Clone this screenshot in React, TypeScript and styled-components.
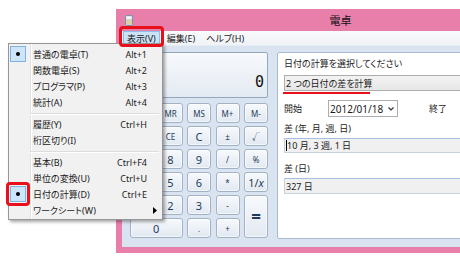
import React from 'react';
import styled, { createGlobalStyle, css } from 'styled-components';

const GlobalStyle = createGlobalStyle`
  html, body {
    margin: 0;
    padding: 0;
    background: #fff;
  }
  body {
    font-family: "Noto Sans", "Noto Sans CJK JP", sans-serif;
    font-feature-settings: "palt" 1;
    color: #1a1a1a;
  }
`;

const callout = css`
  &::after {
    content: '';
    position: absolute;
    border: 3px solid #e8101a;
    border-radius: 4px;
    z-index: 3;
  }
`;

const Stage = styled.div`
  position: relative;
  width: 460px;
  height: 261px;
  overflow: hidden;
  box-sizing: border-box;
  padding: 9px 0 0 116px;
`;

const CalcWindow = styled.div`
  width: 440px;
  height: 244px;
  background: #e87fab;
  display: flex;
  flex-direction: column;
`;

const TitleBar = styled.div`
  height: 22px;
  flex: none;
  display: grid;
  grid-template-columns: 1fr auto 1fr;
  align-items: center;
  padding-left: 9px;
`;

const Title = styled.div`
  font-size: 11px;
  color: #111;
`;

const Client = styled.div`
  flex: 1;
  margin: 0 0 6px 6px;
  background: #dae4f0;
  display: flex;
  flex-direction: column;
`;

const MenuBar = styled.div`
  height: 14px;
  flex: none;
  display: flex;
  gap: 3px;
  padding-left: 1px;
  background: linear-gradient(#f8f9fb, #f0f3f7);
  border-bottom: 1px solid #e6ecf3;
`;

const MenuBarItem = styled.div<{ $open?: boolean }>`
  position: relative;
  display: flex;
  align-items: center;
  padding: 0 3px;
  font-size: 9px;
  box-sizing: border-box;
  border: 1px solid ${({ $open }) => ($open ? '#8fbde3' : 'transparent')};
  background: ${({ $open }) => ($open ? '#cbe3f7' : 'transparent')};

  ${({ $open }) =>
    $open &&
    css`
      ${callout}
      &::after {
        left: -5px;
        right: -5px;
        top: -6px;
        bottom: -3px;
      }
    `}
`;

const Body = styled.div`
  flex: 1;
  display: flex;
  gap: 9px;
  padding: 6px 0 8px 8px;
  min-height: 0;
`;

const Keypad = styled.div`
  width: 138px;
  flex: none;
  display: flex;
  flex-direction: column;
  gap: 5px;
`;

const Display = styled.div`
  height: 46px;
  box-sizing: border-box;
  border: 1px solid #93a7bf;
  border-radius: 2px;
  background: linear-gradient(#f7f9fc, #e4eaf2);
  display: flex;
  align-items: flex-end;
  justify-content: flex-end;
  padding: 0 3px 7px 0;
  font-family: "DejaVu Sans Mono", monospace;
  font-size: 15px;
  line-height: 15px;
  color: #111;
`;

const Keys = styled.div`
  display: grid;
  grid-template-columns: repeat(5, 24px);
  grid-auto-rows: 20px;
  column-gap: 4.5px;
  row-gap: 3px;
`;

const Key = styled.div<{ $wide?: boolean; $tall?: boolean; $small?: boolean; $big?: boolean }>`
  grid-column: span ${({ $wide }) => ($wide ? 2 : 1)};
  grid-row: span ${({ $tall }) => ($tall ? 2 : 1)};
  box-sizing: border-box;
  border: 1px solid #a2b2c6;
  border-radius: 3px;
  background: linear-gradient(#f7f9fc, #e2e9f1);
  box-shadow: inset 0 0 0 1px rgba(255, 255, 255, 0.6);
  display: flex;
  align-items: center;
  justify-content: center;
  color: #1e3a5c;
  font-size: ${({ $small, $big }) => ($big ? '17px' : $small ? '8px' : '11px')};
  font-weight: ${({ $big }) => ($big ? 700 : 400)};
`;

const Panel = styled.div`
  flex: 1;
  background: #fff;
  border: 1px solid #a8bbd3;
  border-radius: 2px;
  padding: 5px 6px;
  display: flex;
  flex-direction: column;
  font-size: 9px;
`;

const Caption = styled.div<{ $gap?: number }>`
  line-height: 12px;
  margin-top: ${({ $gap }) => $gap ?? 0}px;
`;

const Combo = styled.div`
  margin-top: 5px;
  height: 16px;
  box-sizing: border-box;
  border: 1px solid #acacac;
  background: linear-gradient(#f3f3f3, #e6e6e6);
  display: flex;
  align-items: center;
  padding-left: 1px;
`;

const Marker = styled.div`
  width: 87px;
  height: 2px;
  margin: 1px 0 0 -1px;
  background: #e8101a;
`;

const DateRow = styled.div`
  margin-top: 6px;
  height: 17px;
  display: flex;
  align-items: center;
`;

const FieldLabel = styled.div<{ $width?: number; $gap?: number }>`
  width: ${({ $width }) => ($width ? `${$width}px` : 'auto')};
  margin-left: ${({ $gap }) => $gap ?? 0}px;
`;

const DateBox = styled.div`
  width: 70px;
  height: 17px;
  box-sizing: border-box;
  border: 1px solid #abadb3;
  display: flex;
  align-items: center;
  justify-content: space-between;
  padding: 0 3px 0 1px;
  font-size: 10px;
`;

const ResultBox = styled.div<{ $h: number }>`
  margin-top: 3px;
  height: ${({ $h }) => $h}px;
  box-sizing: border-box;
  border: 1px solid #c8d1dc;
  border-top-color: #a3bfe2;
  background: #f0f0f0;
  display: flex;
  align-items: center;
  padding-left: 1px;
`;

const Caret = styled.span`
  width: 1px;
  height: 11px;
  background: #000;
`;

const DropMenu = styled.div`
  position: absolute;
  left: 8px;
  top: 43px;
  width: 155px;
  box-sizing: border-box;
  border: 1px solid #979797;
  padding: 2px 0 1px;
  background: linear-gradient(90deg, #f1f1f1 21px, #e2e2e2 21px 22px, #fff 22px 23px, #f1f1f1 23px);
  box-shadow: 2px 2px 3px rgba(0, 0, 0, 0.35);
  z-index: 2;
  font-size: 9px;
`;

const MenuRow = styled.div`
  height: 16px;
  display: grid;
  grid-template-columns: 22px 1fr auto 15px;
  align-items: center;
`;

const Check = styled.div<{ $marked?: boolean }>`
  position: relative;
  width: 16px;
  height: 16px;
  margin-left: 1px;
  box-sizing: border-box;
  border: 1px solid #7fb3e6;
  background: #cde5f8;
  display: flex;
  align-items: center;
  justify-content: center;

  &::before {
    content: '';
    width: 4px;
    height: 4px;
    border-radius: 50%;
    background: #000;
  }

  ${({ $marked }) =>
    $marked &&
    css`
      ${callout}
      &::after {
        left: -5px;
        right: -5px;
        top: -5px;
        bottom: -5px;
      }
    `}
`;

const ItemLabel = styled.span`
  padding-left: 2px;
`;

const Shortcut = styled.span`
  text-align: right;
`;

const SubArrow = styled.span`
  display: flex;
  justify-content: center;
`;

const Separator = styled.div`
  height: 6px;
  margin: 0 3px 0 21px;
  display: flex;
  align-items: center;

  &::before {
    content: '';
    flex: 1;
    height: 1px;
    background: #dcdcdc;
    box-shadow: 0 1px 0 #fff;
  }
`;

type Item = { label: string; key?: string; check?: boolean; marked?: boolean; sub?: boolean } | 'sep';

const menuItems: Item[] = [
  { label: '普通の電卓(T)', key: 'Alt+1', check: true },
  { label: '関数電卓(S)', key: 'Alt+2' },
  { label: 'プログラマ(P)', key: 'Alt+3' },
  { label: '統計(A)', key: 'Alt+4' },
  'sep',
  { label: '履歴(Y)', key: 'Ctrl+H' },
  { label: '桁区切り(I)' },
  'sep',
  { label: '基本(B)', key: 'Ctrl+F4' },
  { label: '単位の変換(U)', key: 'Ctrl+U' },
  { label: '日付の計算(D)', key: 'Ctrl+E', check: true, marked: true },
  { label: 'ワークシート(W)', sub: true },
];

const keys = [
  'MC', 'MR', 'MS', 'M+', 'M-',
  '←', 'CE', 'C', '±', '√',
  '7', '8', '9', '/', '%',
  '4', '5', '6', '*', '1/x',
  '1', '2', '3', '-', '=',
  '0', '.', '+',
];

const smallKeys = ['±', '√', '*', '/', '%', '-', '+', '.'];

function AppIcon() {
  return (
    <svg width="8" height="11" viewBox="0 0 8 11">
      <rect x="0.5" y="0.5" width="7" height="10" rx="1" fill="#c6d3e2" stroke="#7d91aa" />
      <rect x="1.5" y="1.5" width="5" height="2.5" fill="#f4f7fb" />
      <rect x="1.5" y="5" width="5" height="4.5" fill="#e9cf7a" opacity="0.7" />
    </svg>
  );
}

function Chevron() {
  return (
    <svg width="6" height="4" viewBox="0 0 6 4">
      <path d="M0.5 0.5 L3 3 L5.5 0.5" fill="none" stroke="#333" strokeWidth="1.2" />
    </svg>
  );
}

export default function App() {
  return (
    <>
      <GlobalStyle />
      <Stage>
        <CalcWindow>
          <TitleBar>
            <AppIcon />
            <Title>電卓</Title>
            <span />
          </TitleBar>
          <Client>
            <MenuBar>
              <MenuBarItem $open>表示(V)</MenuBarItem>
              <MenuBarItem>編集(E)</MenuBarItem>
              <MenuBarItem>ヘルプ(H)</MenuBarItem>
            </MenuBar>
            <Body>
              <Keypad>
                <Display>0</Display>
                <Keys>
                  {keys.map((k) => (
                    <Key
                      key={k}
                      $wide={k === '0'}
                      $tall={k === '='}
                      $big={k === '='}
                      $small={(k.length > 1 && k !== '1/x') || smallKeys.includes(k)}
                    >
                      {k === '1/x' ? (
                        <span>
                          1/<i>x</i>
                        </span>
                      ) : (
                        k
                      )}
                    </Key>
                  ))}
                </Keys>
              </Keypad>
              <Panel>
                <Caption>日付の計算を選択してください</Caption>
                <Combo>2 つの日付の差を計算</Combo>
                <Marker />
                <DateRow>
                  <FieldLabel $width={44}>開始</FieldLabel>
                  <DateBox>
                    2012/01/18
                    <Chevron />
                  </DateBox>
                  <FieldLabel $gap={31}>終了</FieldLabel>
                </DateRow>
                <Caption $gap={6}>差 (年, 月, 週, 日)</Caption>
                <ResultBox $h={15}>
                  <Caret />
                  10 月, 3 週, 1 日
                </ResultBox>
                <Caption $gap={10}>差 (日)</Caption>
                <ResultBox $h={16}>327 日</ResultBox>
              </Panel>
            </Body>
          </Client>
        </CalcWindow>
        <DropMenu>
          {menuItems.map((it, i) =>
            it === 'sep' ? (
              <Separator key={i} />
            ) : (
              <MenuRow key={i}>
                {it.check ? <Check $marked={it.marked} /> : <span />}
                <ItemLabel>{it.label}</ItemLabel>
                <Shortcut>{it.key}</Shortcut>
                <SubArrow>
                  {it.sub && (
                    <svg width="4" height="7" viewBox="0 0 4 7">
                      <path d="M0 0 L4 3.5 L0 7 Z" fill="#000" />
                    </svg>
                  )}
                </SubArrow>
              </MenuRow>
            )
          )}
        </DropMenu>
      </Stage>
    </>
  );
}
